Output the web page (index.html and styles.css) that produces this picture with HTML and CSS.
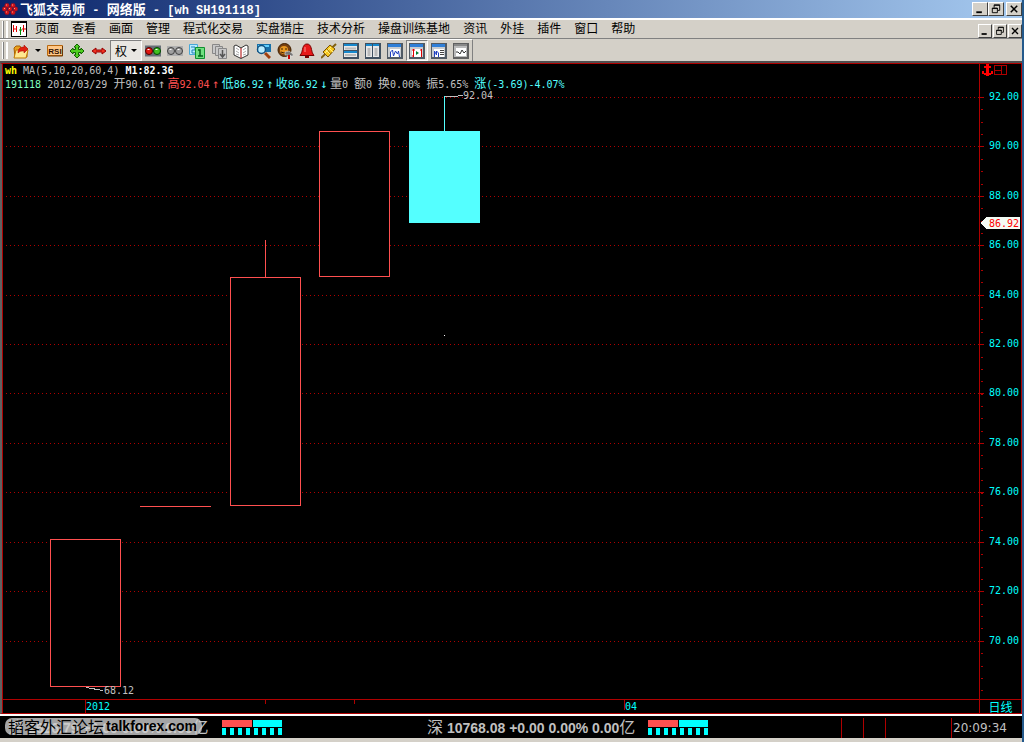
FILE: index.html
```html
<!DOCTYPE html>
<html lang="zh-CN">
<head>
<meta charset="utf-8">
<title>飞狐交易师 - 网络版 - [wh SH191118]</title>
<link rel="stylesheet" href="styles.css">
</head>
<body>
<svg class="defs" width="0" height="0" aria-hidden="true">
  <defs>
    <symbol id="min" viewBox="0 0 14 13"><path d="M3 10h6" stroke="#000" stroke-width="2"/></symbol>
    <symbol id="restore" viewBox="0 0 14 13"><path d="M5 5V2h6v6H9M5 2.500h6M3 5.500h5.500v5H3zM3 6h6" fill="none" stroke="#000"/></symbol>
    <symbol id="close" viewBox="0 0 14 13"><path d="M3.500 3l7 7M10.500 3l-7 7" stroke="#000" stroke-width="1.600"/></symbol>
    <symbol id="win" viewBox="0 0 16 16"><path d="M0 0h16v16H0z" fill="#505a64"/><path d="M1 1h13v13H1z" fill="#c8ccd0"/><path d="M1 1h13v3H1z" fill="#2f7fd8"/><path d="M3 6h10v8H3z" fill="#fff"/></symbol>
  </defs>
</svg>
<header class="titlebar">
  <svg class="logo" width="16" height="14" viewBox="0 0 16 14"><g fill="#d41418" stroke="#7a1030" stroke-width=".5"><circle cx="5" cy="3.500" r="2.300"/><circle cx="11" cy="3.500" r="2.300"/><circle cx="2.500" cy="7" r="2.300"/><circle cx="8" cy="7" r="2.300"/><circle cx="13.500" cy="7" r="2.300"/><circle cx="5" cy="10.500" r="2.300"/><circle cx="11" cy="10.500" r="2.300"/></g><path d="M4 3h1M10 3h1M2 6.500h1M7 6.500h1M12 6.500h1M4 10h1M10 10h1" stroke="#ff9a8a"/></svg>
  <h1 class="title">飞狐交易师<span class="mono"> - </span>网络版<span class="mono"> - [wh SH191118]</span></h1>
  <div class="controls">
    <button class="ctl" aria-label="最小化"><svg><use href="#min"/></svg></button><button class="ctl" aria-label="还原"><svg><use href="#restore"/></svg></button><button class="ctl ctl-close" aria-label="关闭"><svg><use href="#close"/></svg></button>
  </div>
</header>
<nav class="menubar">
  <i class="grip"></i>
  <svg class="docicon" width="16" height="16" viewBox="0 0 16 16"><path d="M0 0h16v16H0z" fill="#000"/><path d="M1 2h14v13H1z" fill="#fff"/><path d="M2.500 4v7M2 8h3M5.500 5v6M12.500 4v7M11 8h4" stroke="#d00" fill="none"/><path d="M9.500 6v8M8 9h3" stroke="#080"/></svg>
  <div class="menus">
    <button>页面</button><button>查看</button><button>画面</button><button>管理</button><button>程式化交易</button><button>实盘猎庄</button><button>技术分析</button><button>操盘训练基地</button><button>资讯</button><button>外挂</button><button>插件</button><button>窗口</button><button>帮助</button>
  </div>
  <div class="controls mdi">
    <button class="ctl" aria-label="最小化文档"><svg><use href="#min"/></svg></button><button class="ctl" aria-label="还原文档"><svg><use href="#restore"/></svg></button><button class="ctl" aria-label="关闭文档"><svg><use href="#close"/></svg></button>
  </div>
</nav>
<div class="toolbar">
  <div class="tools">
    <i class="grip"></i>
    <button class="tool" aria-label="打开"><svg viewBox="0 0 16 16"><path d="M1 5l2-2h4l1 2h6v9H2z" fill="#e8a020" stroke="#a86000"/><path d="M3 7h12l-2 8H1z" fill="#ffe890" stroke="#c07800"/><path d="M5 10c0-4 2-6 6-6V2l4 4-4 4V8c-3 0-4 0-6 2z" fill="#e02010" stroke="#a00000" stroke-width=".5"/></svg></button>
    <button class="drop" aria-label="打开选项"><i class="caret"></i></button>
    <button class="tool" aria-label="RSI"><svg viewBox="0 0 16 16"><path d="M.500 2.500h15v10H.500z" fill="#ffc888" stroke="#b86810"/><path d="M15.500 3v10H1" stroke="#703800" fill="none"/><text x="8" y="11" text-anchor="middle" class="rsi">RSI</text></svg></button>
    <button class="tool" aria-label="移动"><svg viewBox="0 0 16 16"><path d="M8 1l3 3H9.500v2.500H12V5l3 3-3 3V9.500H9.500V12H11l-3 3-3-3h1.500V9.500H4V11L1 8l3-3v1.500h2.500V4H5z" fill="#50d020" stroke="#106000"/></svg></button>
    <button class="tool" aria-label="水平缩放"><svg viewBox="0 0 16 16"><path d="M1 8l4-3v2h6V5l4 3-4 3V9H5v2z" fill="#f03020" stroke="#900"/></svg></button>
    <button class="tool weight pressed">权<i class="caret"></i></button>
    <button class="tool" aria-label="红绿灯"><svg viewBox="0 0 16 16"><path d="M0 2.500h16v11H0z" fill="#687078"/><circle cx="4" cy="8" r="3.500" fill="#e01810" stroke="#500"/><circle cx="12" cy="8" r="3.500" fill="#40c020" stroke="#040"/><path d="M2.500 6.500h2M10.500 6.500h2" stroke="#fff"/></svg></button>
    <button class="tool" aria-label="灰灯"><svg viewBox="0 0 16 16"><path d="M0 3h16v10H0z" fill="#b0b0b0"/><circle cx="4" cy="8" r="3.500" fill="#a0a0a0" stroke="#404040"/><circle cx="12" cy="8" r="3.500" fill="#a0a0a0" stroke="#404040"/><path d="M2.500 6.500h2M10.500 6.500h2" stroke="#fff"/></svg></button>
    <button class="tool" aria-label="页次"><svg viewBox="0 0 16 16"><path d="M.500 1.500h8v10h-8z" fill="#b8ecff" stroke="#48a8d8"/><path d="M2 4h4v3H3v3h4" fill="none" stroke="#2080b8"/><path d="M6.500 4.500h9v11h-9z" fill="#70e080" stroke="#109030"/><path d="M9 7h2v6M9 13h5" fill="none" stroke="#006018" stroke-width="1.500"/></svg></button>
    <button class="tool" aria-label="页面下载"><svg viewBox="0 0 16 16"><g fill="#c8c8c8" stroke="#888"><path d="M1.500 1.500h7v9h-7z"/><path d="M4.500 3.500h7v9h-7z"/><path d="M7.500 5.500h8v10h-8z"/></g><path d="M11.500 7v6M9 11l2.500 3 2.500-3" fill="none" stroke="#555" stroke-width="1.500"/></svg></button>
    <button class="tool" aria-label="书本"><svg viewBox="0 0 16 16"><path d="M1 3l2-1 5 3 5-3 2 1v9l-7 3.500L1 12z" fill="#fff" stroke="#333"/><path d="M8 5v10" stroke="#a00"/><path d="M3 5l3 2M3 8l3 2M3 11l3 1M13 5l-3 2M13 8l-3 2M13 11l-3 1" stroke="#aaa"/></svg></button>
    <button class="tool" aria-label="搜索"><svg viewBox="0 0 16 16"><path d="M2 1h14v8H2z" fill="#1870a8"/><path d="M3 2h11v2H3z" fill="#60d0ff"/><path d="M10 10l5 5" stroke="#a04010" stroke-width="3"/><circle cx="6.500" cy="6.500" r="4" fill="#b8ecff" stroke="#105080" stroke-width="1.500"/></svg></button>
    <button class="tool" aria-label="人物"><svg viewBox="0 0 16 16"><circle cx="7.500" cy="7" r="6.500" fill="#784010" stroke="#402000"/><circle cx="7" cy="7" r="4" fill="#e89820"/><path d="M4 6h2M8 6h2M4 9q3 2 6 0" fill="none" stroke="#402000"/><path d="M8 9l4-1 4 3v2h-2l-1-1v4h-2v-4H8z" fill="#777" stroke="#eee" stroke-width=".5"/><path d="M12 12v4" stroke="#c00" stroke-width="2"/></svg></button>
    <button class="tool" aria-label="预警"><svg viewBox="0 0 16 16"><path d="M8 1c5 0 4 7 6 10l1 1.500H1L2 11C4 8 3 1 8 1z" fill="#e81818" stroke="#700"/><path d="M6 4v5" stroke="#ff9090"/><path d="M6 14h4" stroke="#700" stroke-width="2"/></svg></button>
    <button class="tool" aria-label="连接"><svg viewBox="0 0 16 16"><path d="M0 15L15 1" stroke="#806010" stroke-width="2"/><path d="M2 9l7-7 5 4-7 8z" fill="#f8c820" stroke="#785000"/><path d="M4 10l6-6M8 5l4 4M5 7l4 4" stroke="#fff080"/><path d="M6 6l4 5" stroke="#a07000"/></svg></button>
    <button class="tool" aria-label="横向平铺"><svg viewBox="0 0 16 16"><path d="M0 0h16v16H0z" fill="#405060"/><path d="M1 1h13v13H1z" fill="#e8e8e8"/><path d="M1 2h13M1 9h13" stroke="#1688cc" stroke-width="2"/><path d="M2 5.500h11M2 12h11" stroke="#bbb" stroke-width="2"/><path d="M1 7.500h13" stroke="#405060"/></svg></button>
    <button class="tool" aria-label="纵向平铺"><svg viewBox="0 0 16 16"><path d="M0 0h16v16H0z" fill="#405060"/><path d="M1 1h13v13H1z" fill="#e8e8e8"/><path d="M1 2h13" stroke="#1688cc" stroke-width="2"/><path d="M4 5v8M11 5v8" stroke="#bbb" stroke-width="3"/><path d="M7.500 1v13" stroke="#405060"/></svg></button>
    <button class="tool" aria-label="走势图"><svg viewBox="0 0 16 16"><use href="#win"/><path d="M3.500 14V9l2-2 1 6 2-5 2 3 1-3 1 6" fill="none" stroke="#2040c0"/></svg></button>
    <button class="tool pressed" aria-label="K线图"><svg viewBox="0 0 16 16"><use href="#win"/><path d="M4.500 6v8M12.500 6v8M3 7h3M3 13h2M11 7h2" stroke="#e00000"/><path d="M7 8l3 2-3 2z" fill="#008030"/></svg></button>
    <button class="tool" aria-label="图表列表"><svg viewBox="0 0 16 16"><use href="#win"/><path d="M3.500 14V8l2 4V8l2 2v4" fill="none" stroke="#2040c0"/><path d="M9 7.500h4M9 9.500h4M9 11.500h4" stroke="#444"/></svg></button>
    <button class="tool" aria-label="指标图"><svg viewBox="0 0 16 16"><path d="M0 0h16v16H0z" fill="#606060"/><path d="M1 1h13v13H1z" fill="#bbb"/><path d="M1 2h13" stroke="#888" stroke-width="2"/><path d="M3 5h10v8H3z" fill="#fff"/><path d="M3 9h2l2 2 2-4 2 3 2-2" fill="none" stroke="#333"/></svg></button>
  </div>
</div>
<main class="chart">
  <section class="plot">
    <p class="info"><span class="yellow b">wh</span> MA(5,10,20,60,4) <span class="white b">M1:82.36</span></p>
    <p class="info"><span class="green">191118</span> 2012/03/29 <b>开</b>90.61<b class="arrow">↑</b><span class="red"><b>高</b>92.04<b class="arrow">↑</b></span><span class="cyan"><b>低</b>86.92<b class="arrow">↑</b><b>收</b>86.92<b class="arrow">↓</b></span><b>量</b>0 <b>额</b>0 <b>换</b>0.00% <b>振</b>5.65% <span class="cyan"><b>涨</b>(-3.69)-4.07%</span></p>
    <svg class="candles" role="img" aria-label="K线">
      <g class="grid">
        <line x1="3" x2="100%" y1="6" y2="6"/><line x1="3" x2="100%" y1="55" y2="55"/><line x1="3" x2="100%" y1="105" y2="105"/><line x1="3" x2="100%" y1="154" y2="154"/><line x1="3" x2="100%" y1="204" y2="204"/><line x1="3" x2="100%" y1="253" y2="253"/><line x1="3" x2="100%" y1="302" y2="302"/><line x1="3" x2="100%" y1="352" y2="352"/><line x1="3" x2="100%" y1="401" y2="401"/><line x1="3" x2="100%" y1="451" y2="451"/><line x1="3" x2="100%" y1="500" y2="500"/><line x1="3" x2="100%" y1="550" y2="550"/>
      </g>
      <g class="up">
        <rect x="47" y="448" width="70" height="147"/>
        <line x1="136" x2="207" y1="415" y2="415"/>
        <line x1="262" x2="262" y1="148" y2="186"/>
        <rect x="227" y="186" width="70" height="228"/>
        <rect x="316" y="40" width="70" height="145"/>
      </g>
      <rect class="down" x="406" y="40" width="71" height="92"/>
      <line class="wick" x1="441" x2="441" y1="5" y2="40"/>
      <path class="leader" d="M442 5h8l10-1M83 596l17 3"/>
      <rect class="dot" x="441" y="244" width="1" height="1"/>
      <text x="460" y="8">92.04</text><text x="101" y="603">68.12</text>
    </svg>
    <svg class="dates">
      <path d="M82 0v14M262 0v4M351 0v4M621 0v10"/>
      <text x="83" y="10">2012</text><text x="622" y="10">04</text>
    </svg>
  </section>
  <aside class="axis">
    <svg class="scale">
      <line class="minor" x1="2" x2="2" y1="33" y2="100%"/>
      <path class="ticks" d="M0 33h4M0 82h4M0 132h4M0 181h4M0 231h4M0 280h4M0 329h4M0 379h4M0 428h4M0 478h4M0 527h4M0 577h4"/>
      <path class="mark" d="M6 0h3v2h2v2H9v5h2V7h2v3h-2v1H9v1H6v-1H4v-1H2V7h2v2h2V4H4V2h2z"/>
      <path class="pane" d="M14 1h12v9H14zM21 1v9M14 6h7"/>
      <g class="labels"><text x="9" y="36">92.00</text><text x="9" y="85">90.00</text><text x="9" y="135">88.00</text><text x="9" y="184">86.00</text><text x="9" y="234">84.00</text><text x="9" y="283">82.00</text><text x="9" y="332">80.00</text><text x="9" y="382">78.00</text><text x="9" y="431">76.00</text><text x="9" y="481">74.00</text><text x="9" y="530">72.00</text><text x="9" y="580">70.00</text></g>
      <path class="tag" d="M0 159l6-6h34v12H6z"/><text class="tagtext" x="9" y="163">86.92</text>
    </svg>
    <button class="period">日线</button>
  </aside>
</main>
<footer class="status">
  <div class="market first"><span class="quote"><b>沪</b> 2626.79 +0.00 0.00% 0.00<b>亿</b></span><i class="strength"></i>
    <a class="stamp" href="#"><span>韬客外汇论坛</span><strong>talkforex.com</strong></a></div>
  <div class="market second"><span class="quote"><b>深</b> 10768.08 +0.00 0.00% 0.00<b>亿</b></span><i class="strength"></i></div>
  <div class="cells"><i></i><i></i><i></i></div>
  <time class="clock">20:09:34</time>
</footer>
</body>
</html>
```

FILE: styles.css
```css
* { box-sizing: border-box; }

body {
  display: flex;
  flex-direction: column;
  min-height: 100vh;
  margin: 0;
  border-right: 2px solid #245a8c;
  background: #d4d0c8;
  color: #000;
  font: 12px "Liberation Sans", "Noto Sans CJK SC", sans-serif;
}

button { margin: 0; padding: 0; border: 0; background: none; color: inherit; font: inherit; }
svg { display: block; flex: none; }
.defs { position: absolute; }

.titlebar {
  display: flex;
  align-items: center;
  height: 18px;
  padding-left: 2px;
  background: linear-gradient(90deg, #0a246a, #a6caf0);
  color: #fff;
}
.title { flex: 1; margin: 0 0 0 2px; font: bold 13px/16px "Noto Sans CJK SC", sans-serif; white-space: pre; }
.mono { font: bold 12px "Liberation Mono", monospace; }

.controls { display: flex; }
.ctl {
  width: 16px;
  height: 14px;
  border: 1px solid;
  border-color: #fff #404040 #404040 #fff;
  background: #d4d0c8;
}
.ctl svg { width: 14px; height: 12px; }
.ctl-close { margin-left: 2px; }
.mdi { gap: 1px; align-self: flex-end; }
.mdi .ctl { width: 14px; }
.mdi .ctl svg { width: 12px; }

.menubar {
  display: flex;
  align-items: center;
  height: 21px;
  border-top: 2px solid #fff;
  border-bottom: 1px solid #808080;
}
.grip {
  flex: none;
  width: 6px;
  height: 17px;
  margin: 0 2px;
  border: solid #fff;
  border-width: 0 1px;
  background: linear-gradient(90deg, #808080 1px, #d4d0c8 1px 3px, #fff 3px 4px, #808080 4px);
}
.docicon { margin-left: 1px; }
.menus { display: flex; flex: 1; gap: 13px; margin-left: 8px; line-height: 16px; white-space: nowrap; }

.toolbar { display: flex; height: 24px; border-bottom: 2px solid #505050; }
.tools { display: flex; align-items: center; border-top: 1px solid #fff; border-right: 1px solid #808080; }
.tool { display: flex; flex: none; align-items: center; justify-content: center; width: 22px; height: 21px; }
.tool svg { width: 16px; height: 16px; }
.drop { display: flex; justify-content: center; width: 12px; }
.caret { display: block; width: 6px; border: solid transparent; border-width: 3px 3px 0; border-top-color: #000; }
.pressed { border: 1px solid; border-color: #808080 #fff #fff #808080; background: #e9e7e2; }
.weight { gap: 4px; width: 32px; }
svg .rsi { fill: #301000; font: bold 8px "Liberation Sans", sans-serif; }

.chart {
  display: flex;
  flex: 1;
  border: 1px solid #b00000;
  border-left: 2px solid #606060;
  background: #000;
  color: #c0c0c0;
  font: 10px "DejaVu Sans Mono", monospace;
}
.plot {
  display: flex;
  flex: 1;
  flex-direction: column;
  min-width: 0;
  border-left: 1px solid #b00000;
}
.info { margin: 0 0 0 2px; font-size: 10px; line-height: 13px; height: 13px; white-space: pre; }
.info + .info { height: 14px; }
.info b { font: 12px/12px "Noto Sans CJK SC", sans-serif; }
.info .arrow { display: inline-block; width: 12px; font: 12px/12px "DejaVu Sans Mono", monospace; text-align: center; }
.info .b { font-weight: bold; }
.yellow { color: #ff0; }
.white { color: #fff; }
.green { color: #80ffc0; }
.red { color: #ff5050; }
.cyan { color: #54ffff; }

.candles { flex: 1; width: 100%; min-height: 608px; shape-rendering: crispEdges; }
svg text { fill: #c0c0c0; }
.grid line { stroke: #b00000; stroke-dasharray: 1 3; transform: translateY(.5px); }
.up { fill: #000; stroke: #ff5050; transform: translate(.5px, .5px); }
.down { fill: #54ffff; }
.wick { stroke: #54ffff; transform: translateX(.5px); }
.leader { fill: none; stroke: #c0c0c0; transform: translateY(.5px); }
.dot { fill: #fff; }
.dates { width: 100%; height: 14px; border-top: 1px solid #b00000; }
.dates path { stroke: #b00000; transform: translateX(.5px); }
.dates text, .labels text { fill: #00ffff; }

.axis { display: flex; flex: none; flex-direction: column; width: 42px; border-left: 1px solid #b00000; }
.scale { flex: 1; width: 41px; shape-rendering: crispEdges; }
.minor { stroke: #b00000; stroke-width: 2; stroke-dasharray: 1 11.36; }
.ticks { stroke: #b00000; transform: translateY(.5px); }
.mark { fill: #f00; }
.pane { fill: none; stroke: #b00000; transform: translate(.5px, .5px); }
.tag { fill: #f4fbf4; }
svg .tagtext { fill: #f00; }
.period { height: 14px; border-top: 1px solid #b00000; color: #00ffff; font: 12px/12px "Noto Sans CJK SC", sans-serif; }

.status {
  display: flex;
  align-items: center;
  height: 28px;
  border-top: 2px solid #fff;
  border-bottom: 4px solid #d4d0c8;
  background: #000;
  color: #c0c0c0;
}
.market { position: relative; display: flex; align-items: center; gap: 6px; white-space: nowrap; }
.first { flex: 0 0 427px; padding-left: 8px; }
.first .quote { width: 208px; }
.second { flex: 1; }
.quote { width: 215px; font: bold 14px/20px "Liberation Sans", "Noto Sans CJK SC", sans-serif; }
.quote b { font: 16px/20px "Noto Sans CJK SC", sans-serif; }
.strength {
  width: 60px;
  height: 15px;
  background:
    linear-gradient(90deg, #ff5050 30px, #000 30px 31px, #00ffff 31px) 0 0 / 100% 7px no-repeat,
    repeating-linear-gradient(90deg, #00ffff 0 4px, #000 4px 8px) 0 8px / 100% 7px no-repeat;
}
.stamp {
  position: absolute;
  left: 5px;
  top: 2px;
  display: flex;
  align-items: center;
  gap: 2px;
  height: 17px;
  padding: 0 5px 0 3px;
  border-radius: 7px;
  background: rgba(205, 205, 205, .8);
  color: #000;
  text-decoration: none;
}
.stamp span { font: 16px/17px "Noto Sans CJK SC", sans-serif; }
.stamp strong { font: bold 14px/17px "Liberation Sans", sans-serif; }
.cells { display: flex; align-self: stretch; padding-top: 2px; }
.cells i { width: 22px; border-left: 1px solid #b00000; }
.clock {
  align-self: stretch;
  width: 71px;
  margin: 2px 0 0 44px;
  padding-left: 1px;
  border-left: 1px solid #b00000;
  font: 12px/20px "DejaVu Sans", sans-serif;
}
```
